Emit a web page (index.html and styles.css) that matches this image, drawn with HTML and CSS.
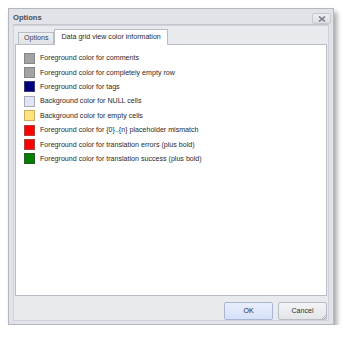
FILE: index.html
```html
<!DOCTYPE html>
<html>
<head>
<meta charset="utf-8">
<link rel="stylesheet" href="styles.css">
</head>
<body>
<div class="window">
  <div class="titlebar">
    <span class="title">Options</span>
    <span class="close"><svg width="8" height="6" viewBox="0 0 8 6"><path d="M1 0.5 L7 5.5 M7 0.5 L1 5.5" stroke="#7a7f88" stroke-width="1.6"/></svg></span>
  </div>
  <div class="client">
    <div class="tabs">
      <div class="tab">Options</div>
      <div class="tab active">Data grid view color information</div>
    </div>
    <div class="panel">
      <div class="row"><span class="sw gray"></span>Foreground color for comments</div>
      <div class="row"><span class="sw gray"></span>Foreground color for completely empty row</div>
      <div class="row"><span class="sw navy"></span>Foreground color for tags</div>
      <div class="row"><span class="sw lav"></span>Background color for NULL cells</div>
      <div class="row"><span class="sw yel"></span>Background color for empty cells</div>
      <div class="row"><span class="sw red"></span>Foreground color for {0}..{n} placeholder mismatch</div>
      <div class="row"><span class="sw red"></span>Foreground color for translation errors (plus bold)</div>
      <div class="row"><span class="sw green"></span>Foreground color for translation success (plus bold)</div>
    </div>
    <div class="buttons">
      <div class="btn ok">OK</div>
      <div class="btn">Cancel</div>
    </div>
    <svg class="grip" width="7" height="7" viewBox="0 0 7 7"><path d="M6 1 L1 6 M6 3 L3 6 M6 5 L5 6" stroke="#a8adb6" stroke-width="0.8"/></svg>
  </div>
</div>
</body>
</html>
```

FILE: styles.css
```css
html, body {
  margin: 0;
  padding: 0;
  background: #ffffff;
}
body {
  font-family: "Liberation Sans", Arial, sans-serif;
  font-size: 7.1px;
  color: #2a2a2a;
}
.window {
  position: relative;
  margin: 8px 0 0 8px;
  width: 326px;
  height: 317px;
  box-sizing: border-box;
  border: 1px solid #b3b7bf;
  background: #e1e3e8;
  box-shadow: 3px 4px 5px rgba(0,0,0,0.35);
  display: flex;
  flex-direction: column;
  padding: 0 4px 4px 4px;
}
.titlebar {
  height: 16px;
  display: flex;
  align-items: center;
  justify-content: space-between;
  border-bottom: 1px solid #c4c7ce;
}
.title {
  font-weight: bold;
  color: #4a4e56;
  font-size: 7.6px;
  margin-top: 1px;
}
.close {
  width: 17px;
  height: 9px;
  border: 1px solid #c5c8cf;
  border-radius: 2px;
  background: linear-gradient(#eceef2, #dcdee3);
  display: flex;
  align-items: center;
  justify-content: center;
  margin-right: -2px;
  margin-top: 4px;
}
.client {
  flex: 1;
  background: #e9eaee;
  border: 1px solid #cfd2d8;
  position: relative;
  display: flex;
  flex-direction: column;
  padding: 2px 1px 0 1px;
}
.tabs {
  display: flex;
  align-items: flex-end;
  padding-left: 3px;
  height: 16px;
}
.tab {
  height: 11px;
  line-height: 11px;
  padding: 0 5px;
  border: 1px solid #b9bcc4;
  border-bottom: none;
  background: linear-gradient(#eeeff2, #e0e2e6);
  color: #3a3d44;
}
.tab.active {
  height: 15px;
  line-height: 14px;
  background: #ffffff;
  position: relative;
  top: 1px;
  padding: 0 6px;
  color: #2a2a2a;
  z-index: 1;
}
.panel {
  height: 252px;
  background: #ffffff;
  border: 1px solid #b9bcc4;
  padding: 6px 0 0 8px;
  box-sizing: border-box;
}
.row {
  height: 14.4px;
  display: flex;
  align-items: center;
  white-space: nowrap;
}
.sw {
  width: 9px;
  height: 9px;
  border: 1px solid #8a8a8a;
  margin-right: 5px;
  flex: none;
}
.gray { background: #a3a3a3; border-color: #868686; }
.navy { background: #000080; border-color: #3a3a6a; }
.lav { background: #e2e3f6; border-color: #a9aab8; }
.yel { background: #ffe27e; border-color: #c8b060; }
.red { background: #ff0000; border-color: #b04040; }
.green { background: #008000; border-color: #2a5a2a; }
.buttons {
  display: flex;
  justify-content: flex-end;
  gap: 5px;
  padding-top: 6px;
}
.btn {
  width: 47px;
  height: 16px;
  line-height: 16px;
  text-align: center;
  border: 1px solid #b8bcc5;
  border-radius: 2px;
  background: linear-gradient(#f3f4f6, #e3e5e9);
  color: #2a2d33;
}
.btn.ok {
  background: linear-gradient(#e8eefc, #d6e0f7);
  border-color: #a9b5d2;
}
.grip {
  position: absolute;
  right: 0;
  bottom: 0;
}
```
